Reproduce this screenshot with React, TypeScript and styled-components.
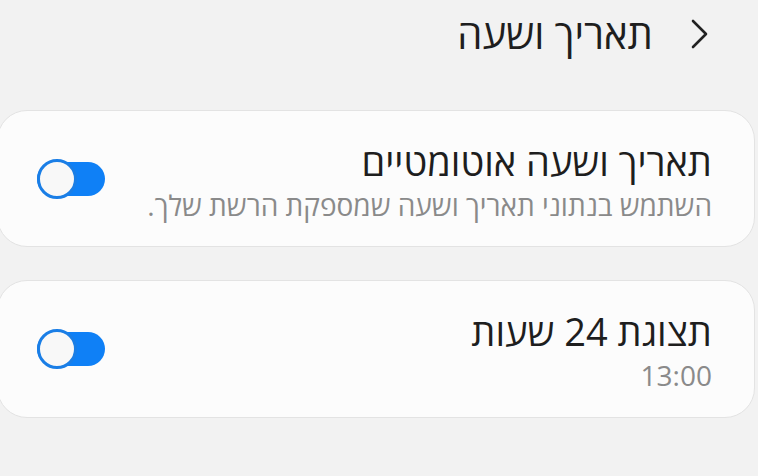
import React, { useState } from 'react';
import styled, { createGlobalStyle } from 'styled-components';

const GlobalStyle = createGlobalStyle`
  html, body {
    margin: 0;
    padding: 0;
    background: #f2f2f2;
    overflow: hidden;
  }
  body {
    font-family: "Open Sans", "Liberation Sans", "DejaVu Sans", sans-serif;
  }
`;

const Screen = styled.div`
  direction: rtl;
  width: 758px;
  height: 476px;
  background: #f2f2f2;
  color: #202020;
`;

const Header = styled.header`
  display: flex;
  align-items: center;
  height: 68px;
  padding-right: 49px;
  gap: 38px;
`;

const BackButton = styled.button`
  display: flex;
  align-items: center;
  justify-content: center;
  width: 18px;
  height: 30px;
  padding: 0;
  border: none;
  background: none;
  color: #222;
  cursor: pointer;
`;

const Title = styled.h1`
  margin: 0;
  font-size: 40px;
  font-weight: 400;
  line-height: 1;
  color: #1e1e1e;
`;

const List = styled.div`
  display: flex;
  flex-direction: column;
  gap: 33px;
  padding-top: 42px;
`;

const Card = styled.div<{ $height: number }>`
  display: flex;
  align-items: center;
  justify-content: space-between;
  box-sizing: border-box;
  height: ${({ $height }) => $height}px;
  margin: 0 3px 0 -3px;
  padding: 0 42px 0 39px;
  background: #fcfcfc;
  border: 1px solid #e3e3e3;
  border-radius: 30px;
`;

const TextBlock = styled.div`
  display: flex;
  flex-direction: column;
  gap: 7px;
  padding-top: 1px;
`;

const ItemTitle = styled.div`
  font-size: 38px;
  line-height: 44px;
  color: #1e1e1e;
`;

const ItemSub = styled.div`
  font-size: 28px;
  line-height: 30px;
  color: #8a8a8a;
`;

const Track = styled.button<{ $on: boolean }>`
  position: relative;
  width: 68px;
  height: 34px;
  padding: 0;
  border: none;
  border-radius: 17px;
  background: ${({ $on }) => ($on ? '#0f80f6' : '#c9c9c9')};
  cursor: pointer;
  flex-shrink: 0;
`;

// the knob sits over the track and is larger than it
const Thumb = styled.span<{ $on: boolean }>`
  position: absolute;
  top: 50%;
  ${({ $on }) => ($on ? 'left: 0;' : 'right: 0;')}
  width: 40px;
  height: 40px;
  box-sizing: border-box;
  margin-top: -20px;
  border-radius: 50%;
  border: 3px solid ${({ $on }) => ($on ? '#1a7ee6' : '#9a9a9a')};
  background: #f8f8f8;
`;

const Toggle: React.FC<{ on: boolean; onChange: () => void }> = ({ on, onChange }) => (
  <Track $on={on} onClick={onChange} aria-pressed={on}>
    <Thumb $on={on} />
  </Track>
);

const Chevron = () => (
  <svg width="18" height="30" viewBox="0 0 18 30" fill="none">
    <path d="M2 2 L15 15 L2 28" stroke="currentColor" strokeWidth="2.6" strokeLinecap="round" strokeLinejoin="round" />
  </svg>
);

const App: React.FC = () => {
  const [auto, setAuto] = useState(true);
  const [h24, setH24] = useState(true);

  return (
    <>
      <GlobalStyle />
      <Screen>
        <Header>
          <BackButton aria-label="חזרה">
            <Chevron />
          </BackButton>
          <Title>תאריך ושעה</Title>
        </Header>

        <List>
          <Card $height={137}>
            <TextBlock>
              <ItemTitle>תאריך ושעה אוטומטיים</ItemTitle>
              <ItemSub>השתמש בנתוני תאריך ושעה שמספקת הרשת שלך.</ItemSub>
            </TextBlock>
            <Toggle on={auto} onChange={() => setAuto(!auto)} />
          </Card>

          <Card $height={138}>
            <TextBlock>
              <ItemTitle>תצוגת 24 שעות</ItemTitle>
              <ItemSub>13:00</ItemSub>
            </TextBlock>
            <Toggle on={h24} onChange={() => setH24(!h24)} />
          </Card>
        </List>
      </Screen>
    </>
  );
};

export default App;
